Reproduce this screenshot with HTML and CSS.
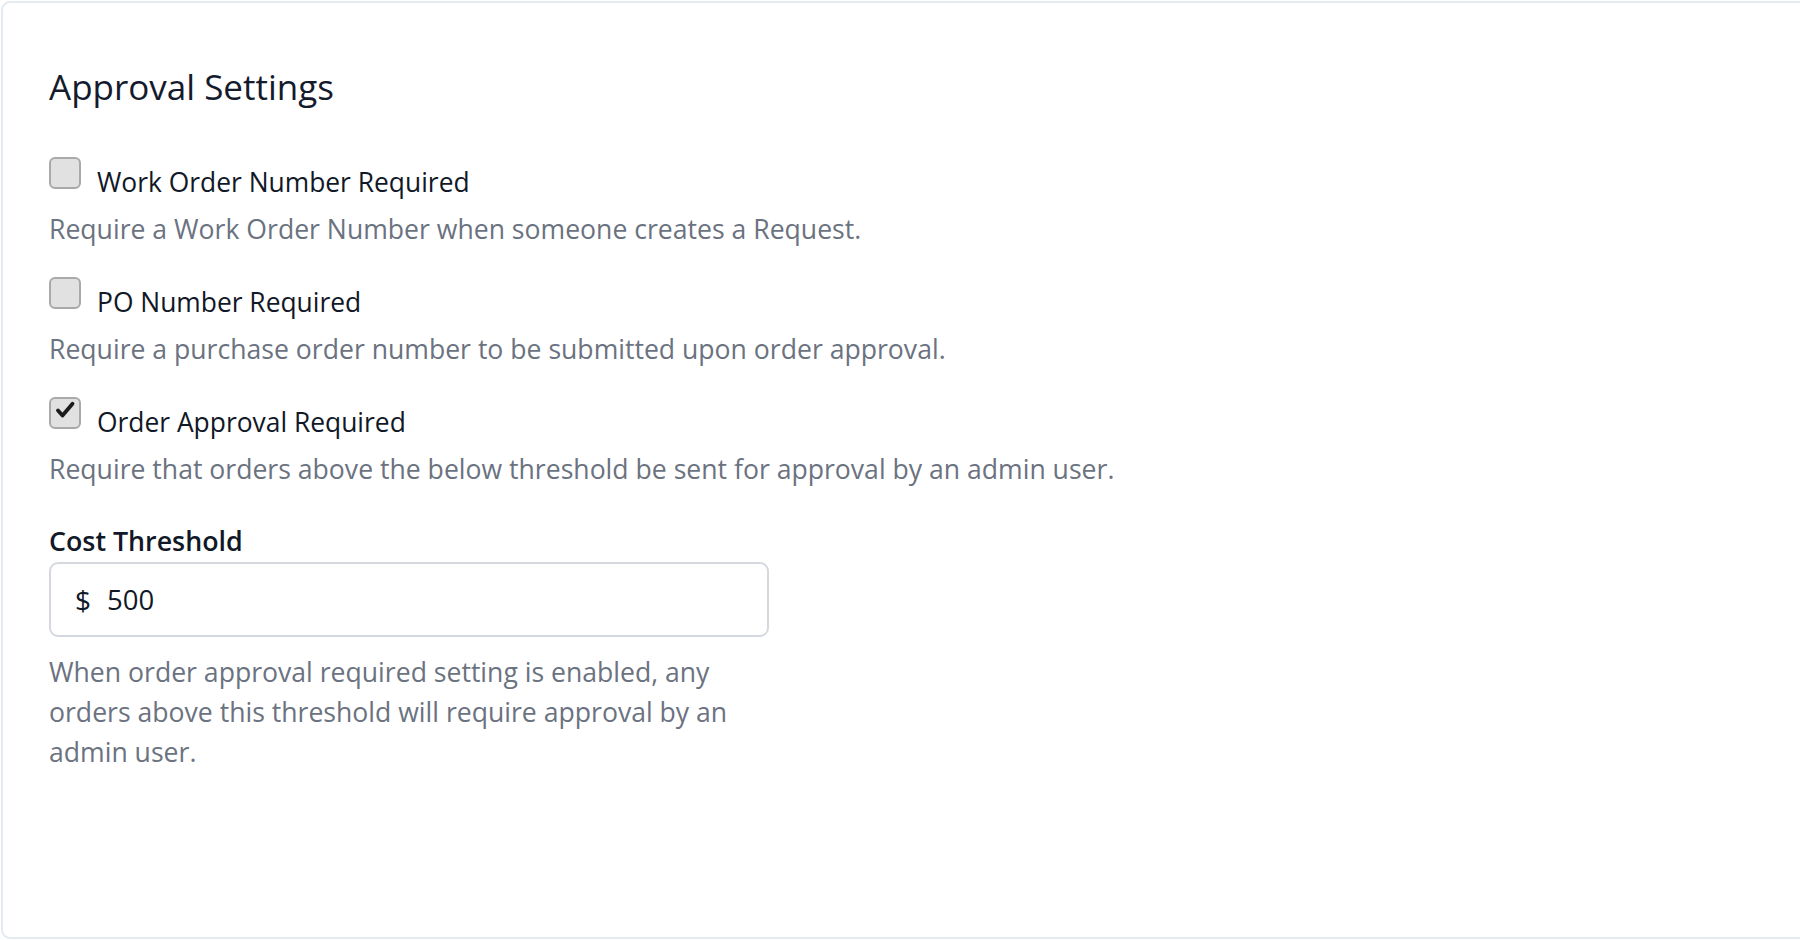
FILE: index.html
```html
<!DOCTYPE html>
<html lang="en">
<head>
    <meta charset="UTF-8">
    <meta name="viewport" content="width=device-width, initial-scale=1.0">
    <title>Approval Settings</title>
    <link rel="stylesheet" href="styles.css">
</head>
<body>
    <div class="card">
        <h2 class="card-title">Approval Settings</h2>

        <div class="setting">
            <label class="setting-label">
                <span class="checkbox"></span>
                <span class="setting-name">Work Order Number Required</span>
            </label>
            <p class="setting-help">Require a Work Order Number when someone creates a Request.</p>
        </div>

        <div class="setting">
            <label class="setting-label">
                <span class="checkbox"></span>
                <span class="setting-name">PO Number Required</span>
            </label>
            <p class="setting-help">Require a purchase order number to be submitted upon order approval.</p>
        </div>

        <div class="setting">
            <label class="setting-label">
                <span class="checkbox checked">
                    <svg viewBox="0 0 28 28" width="28" height="28"><path d="M7 11.5 L11.5 16.5 L21.5 4.8" fill="none" stroke="#1c1c1c" stroke-width="3.8" stroke-linecap="round" stroke-linejoin="round"/></svg>
                </span>
                <span class="setting-name">Order Approval Required</span>
            </label>
            <p class="setting-help">Require that orders above the below threshold be sent for approval by an admin user.</p>
        </div>

        <div class="field">
            <label class="field-label" for="cost-threshold">Cost Threshold</label>
            <div class="input-group">
                <span class="input-prefix">$</span>
                <input id="cost-threshold" class="input" type="text" value="500">
            </div>
            <p class="field-help">When order approval required setting is enabled, any orders above this threshold will require approval by an admin user.</p>
        </div>
    </div>
</body>
</html>
```

FILE: styles.css
```css
html, body {
    margin: 0;
    height: 100%;
    overflow: hidden;
}
body {
    padding: 1px 0 1px 1px;
    box-sizing: border-box;
    font-family: "Open Sans", Roboto, sans-serif;
    color: #111827;
    background: white;
}
.card {
    box-sizing: border-box;
    height: 100%;
    margin-right: -20px;
    padding: 62px 46px;
    border: 2px solid #e5eaf1;
    border-radius: 9px;
    background: white;
}
.card-title {
    margin: 0 0 48px;
    font-size: 35px;
    font-weight: 400;
    line-height: 44px;
    color: #141b2d;
}
.setting {
    margin-bottom: 28px;
}
.setting-label {
    display: flex;
    align-items: flex-start;
    gap: 16px;
    font-size: 26.4px;
    line-height: 34px;
    color: #111827;
}
.setting-name {
    padding-top: 8px;
}
.checkbox {
    box-sizing: border-box;
    display: inline-flex;
    align-items: center;
    justify-content: center;
    flex-shrink: 0;
    width: 32px;
    height: 32px;
    border: 2px solid #a9a9a9;
    border-radius: 6px;
    background: #e1e1e1;
}
.checkbox svg {
    display: block;
}
.setting-help {
    margin: 10px 0 0;
    font-size: 26.6px;
    line-height: 40px;
    color: #6b7280;
}
.field {
    margin-top: 34px;
    width: 720px;
}
.field-label {
    display: block;
    margin-bottom: 3px;
    font-size: 26.8px;
    font-weight: 600;
    line-height: 36px;
    color: #111827;
}
.input-group {
    display: flex;
    align-items: center;
    height: 75px;
    box-sizing: border-box;
    padding: 0 24px;
    border: 2px solid #d5d9df;
    border-radius: 9px;
}
.input-prefix {
    font-size: 28px;
    margin-right: 16px;
    color: #111827;
}
.input {
    flex: 1;
    border: none;
    outline: none;
    padding: 0;
    font-family: inherit;
    font-size: 27.5px;
    color: #111827;
    background: transparent;
}
.field-help {
    margin: 15px 0 0;
    font-size: 26.6px;
    line-height: 40px;
    color: #6b7280;
}
```
